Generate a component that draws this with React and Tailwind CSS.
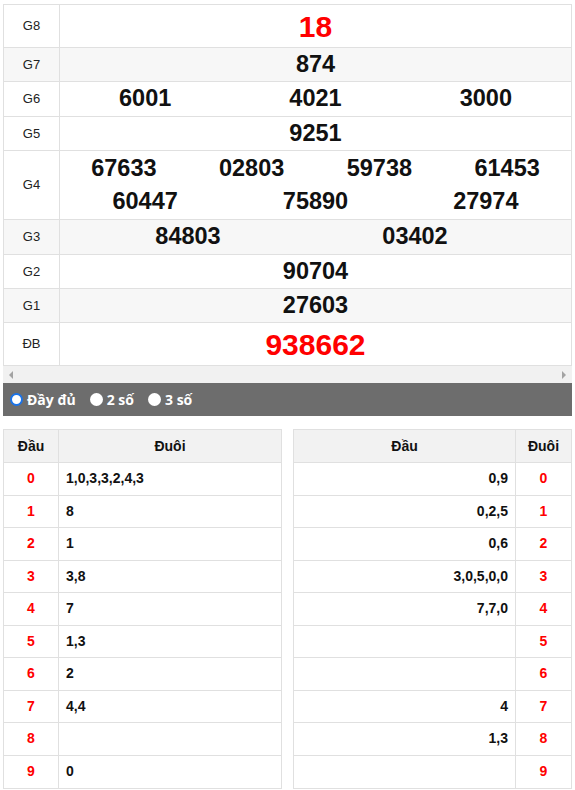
import React from "react";

// Prize rows of the draw result table
const PRIZES = [
  { label: "G8", h: "h-[43px]", bg: "bg-white", lines: [["18"]], big: true },
  { label: "G7", h: "h-[34px]", bg: "bg-[#f7f7f7]", lines: [["874"]] },
  { label: "G6", h: "h-[35px]", bg: "bg-white", lines: [["6001", "4021", "3000"]] },
  { label: "G5", h: "h-[34px]", bg: "bg-white", lines: [["9251"]] },
  { label: "G4", h: "h-[69px]", bg: "bg-white", lines: [["67633", "02803", "59738", "61453"], ["60447", "75890", "27974"]] },
  { label: "G3", h: "h-[35px]", bg: "bg-[#f7f7f7]", lines: [["84803", "03402"]], g3: true },
  { label: "G2", h: "h-[34px]", bg: "bg-white", lines: [["90704"]] },
  { label: "G1", h: "h-[34px]", bg: "bg-[#f7f7f7]", lines: [["27603"]] },
  { label: "ĐB", h: "h-[42px]", bg: "bg-white", lines: [["938662"]], big: true },
];

const HEAD = ["1,0,3,3,2,4,3", "8", "1", "3,8", "7", "1,3", "2", "4,4", "", "0"];
const TAIL = ["0,9", "0,2,5", "0,6", "3,0,5,0,0", "7,7,0", "", "", "4", "1,3", ""];

function PrizeRow({ p, last }) {
  return (
    <div className={`flex ${p.h} ${p.bg} ${last ? "" : "border-b border-[#e0e0e0]"}`}>
      <div className="w-[56px] shrink-0 border-r border-[#e0e0e0] flex items-center justify-center text-[13px] text-[#222]">
        {p.label}
      </div>
      <div className="flex-1 flex flex-col justify-center">
        {p.lines.map((nums, i) =>
          p.g3 ? (
            <div key={i} className="flex h-[33px] items-center text-[23.5px] font-bold text-[#111]">
              <div className="w-[256px] text-center">{nums[0]}</div>
              <div className="w-[198px] text-center">{nums[1]}</div>
            </div>
          ) : (
            <div key={i} className={`flex items-center ${p.lines.length > 1 ? "h-[33px]" : ""}`}>
              {nums.map((n) => (
                <div
                  key={n}
                  className={`flex-1 text-center font-bold ${p.big ? "text-[30px] text-[#ff0000]" : "text-[23.5px] text-[#111]"}`}
                >
                  {n}
                </div>
              ))}
            </div>
          )
        )}
      </div>
    </div>
  );
}

function Radio({ checked, label }) {
  return (
    <label className="flex items-center gap-[4px]">
      <span
        className={`w-[13px] h-[13px] rounded-full bg-white ${checked ? "border-[2px] border-[#1a73e8]" : ""}`}
      />
      <span className="text-[14px] font-bold text-white">{label}</span>
    </label>
  );
}

export default function App() {
  return (
    <div className="w-[575px] h-[790px] bg-white overflow-hidden pt-[4px] px-[3px]" style={{ fontFamily: '"Liberation Sans", Arial, sans-serif' }}>
      {/* result table + fake horizontal scrollbar */}
      <div className="w-[569px] border border-[#e0e0e0]">
        {PRIZES.map((p, i) => (
          <PrizeRow key={p.label} p={p} last={i === PRIZES.length - 1} />
        ))}
      </div>
      <div className="w-[569px] h-[17px] bg-[#f1f1f1] flex items-center justify-between px-[6px]">
        <span className="w-0 h-0 border-y-[4px] border-y-transparent border-r-[4px] border-r-[#a3a3a3]" />
        <span className="w-0 h-0 border-y-[4px] border-y-transparent border-l-[4px] border-l-[#a3a3a3]" />
      </div>

      {/* view mode */}
      <div
        className="w-[569px] h-[33px] bg-[#6d6d6d] flex items-center gap-[14px] pl-[7px]"
        style={{ fontFamily: '"Open Sans", "Liberation Sans", sans-serif' }}
      >
        <Radio checked label="Đầy đủ" />
        <Radio label="2 số" />
        <Radio label="3 số" />
      </div>

      {/* đầu / đuôi tables */}
      <div className="flex gap-[11px] mt-[13px] text-[14px] font-bold">
        <div className="w-[279px] border border-[#e0e0e0]">
          <div className="flex h-[33px] bg-[#f2f2f2] border-b border-[#e0e0e0] text-[#111]">
            <div className="w-[55px] border-r border-[#e0e0e0] flex items-center justify-center">Đầu</div>
            <div className="flex-1 flex items-center justify-center">Đuôi</div>
          </div>
          {HEAD.map((v, i) => (
            <div key={i} className={`flex h-[32.5px] ${i < 9 ? "border-b border-[#e0e0e0]" : ""}`}>
              <div className="w-[55px] border-r border-[#e0e0e0] flex items-center justify-center text-[#ff0000]">{i}</div>
              <div className="flex-1 flex items-center pl-[7px] text-[#111]">{v}</div>
            </div>
          ))}
        </div>
        <div className="w-[279px] border border-[#e0e0e0]">
          <div className="flex h-[33px] bg-[#f2f2f2] border-b border-[#e0e0e0] text-[#111]">
            <div className="flex-1 flex items-center justify-center">Đầu</div>
            <div className="w-[56px] border-l border-[#e0e0e0] flex items-center justify-center">Đuôi</div>
          </div>
          {TAIL.map((v, i) => (
            <div key={i} className={`flex h-[32.5px] ${i < 9 ? "border-b border-[#e0e0e0]" : ""}`}>
              <div className="flex-1 flex items-center justify-end pr-[7px] text-[#111]">{v}</div>
              <div className="w-[56px] border-l border-[#e0e0e0] flex items-center justify-center text-[#ff0000]">{i}</div>
            </div>
          ))}
        </div>
      </div>
    </div>
  );
}
